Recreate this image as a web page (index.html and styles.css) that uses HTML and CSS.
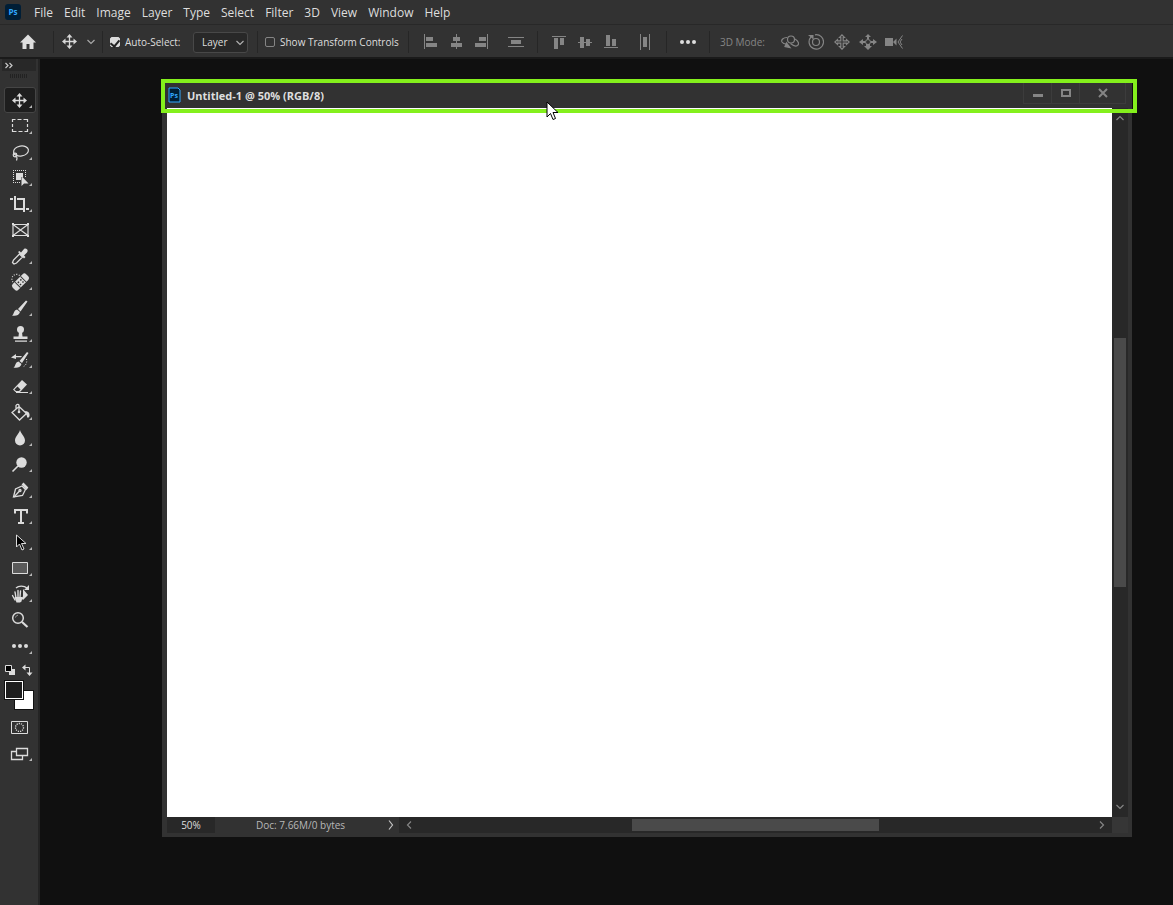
FILE: index.html
```html
<!DOCTYPE html>
<html lang="en">
<head>
    <meta charset="UTF-8">
    <meta name="viewport" content="width=device-width, initial-scale=1.0">
    <title>Untitled-1 @ 50% (RGB/8)</title>
    <link rel="stylesheet" href="styles.css">
</head>
<body>
    <nav class="menubar">
        <svg class="app-logo" width="16" height="16" viewBox="0 0 16 16"><rect width="16" height="16" rx="3" fill="#001e36"/><text x="8" y="11" text-anchor="middle">Ps</text></svg>
        <button>File</button>
        <button>Edit</button>
        <button>Image</button>
        <button>Layer</button>
        <button>Type</button>
        <button>Select</button>
        <button>Filter</button>
        <button>3D</button>
        <button>View</button>
        <button>Window</button>
        <button>Help</button>
    </nav>

    <div class="options">
        <button class="home" aria-label="Home"><svg width="16" height="16" viewBox="0 0 16 16"><path d="M8 0.5L0 8.5h2.5V15H6.500V10h3v5h4V8.500H16z" fill="#dedede"/></svg></button>
        <div class="current-tool">
            <button aria-label="Move tool">
                <svg width="16" height="16" viewBox="0 0 16 16"><path d="M7.500 2v11M2 7.500h11" stroke="#d8d8d8" stroke-width="1.300"/><path d="M7.500 0l3 3.500h-6zM7.500 15l3-3.500h-6zM0 7.500l3.500-3v6zM15 7.500l-3.500-3v6z" fill="#d8d8d8"/></svg>
            </button>
            <button aria-label="Tool presets"><svg width="8" height="6" viewBox="0 0 8 6"><path d="M.5 1L4 4.500 7.500 1" fill="none" stroke="#a8a8a8" stroke-width="1.200"/></svg></button>
        </div>
        <div class="select-group">
            <label class="check"><input type="checkbox" checked>Auto-Select:</label>
            <div class="dropdown">
                <select aria-label="Auto-select target"><option>Layer</option><option>Group</option></select>
                <svg class="arrow" width="8" height="6" viewBox="0 0 8 6"><path d="M.5 1L4 4.500 7.500 1" fill="none" stroke="#b0b0b0" stroke-width="1.200"/></svg>
            </div>
        </div>
        <div class="transform-group">
            <label class="check"><input type="checkbox">Show Transform Controls</label>
        </div>
        <div class="icon-group">
            <button aria-label="Align left edges"><svg width="16" height="16" viewBox="0 0 16 16" fill="#858585"><path d="M2 0h1v15H2zM4 3h7v4H4zM4 9h11v4H4z"/></svg></button>
            <button aria-label="Align horizontal centers"><svg width="16" height="16" viewBox="0 0 16 16" fill="#858585"><path d="M8 0h1v15H8zM5 3h7v4H5zM3 9h11v4H3z"/></svg></button>
            <button aria-label="Align right edges"><svg width="16" height="16" viewBox="0 0 16 16" fill="#858585"><path d="M13 0h1v15h-1zM5 3h7v4H5zM1 9h11v4H1z"/></svg></button>
            <button class="spaced" aria-label="Distribute vertically"><svg width="16" height="16" viewBox="0 0 16 16" fill="#858585"><path d="M0 3h16v1H0zM0 12h16v1H0zM3 6h10v4H3z"/></svg></button>
        </div>
        <div class="icon-group">
            <button aria-label="Align top edges"><svg width="16" height="16" viewBox="0 0 16 16" fill="#858585"><path d="M1 2h14v1H1zM3 4h4v11H3zM9 4h4v7H9z"/></svg></button>
            <button aria-label="Align vertical centers"><svg width="16" height="16" viewBox="0 0 16 16" fill="#858585"><path d="M1 8h14v1H1zM3 3h4v11H3zM9 5h4v7H9z"/></svg></button>
            <button aria-label="Align bottom edges"><svg width="16" height="16" viewBox="0 0 16 16" fill="#858585"><path d="M1 13h14v1H1zM3 1h4v11H3zM9 5h4v7H9z"/></svg></button>
            <button class="spaced" aria-label="Distribute horizontally"><svg width="16" height="16" viewBox="0 0 16 16" fill="#858585"><path d="M3 0h1v16H3zM12 0h1v16h-1zM6 3h4v10H6z"/></svg></button>
        </div>
        <div class="icon-group">
            <button aria-label="More options"><svg width="16" height="16" viewBox="0 0 16 16" fill="#dedede"><circle cx="2" cy="8" r="2"/><circle cx="8" cy="8" r="2"/><circle cx="14" cy="8" r="2"/></svg></button>
        </div>
        <div class="mode-group">
            <span>3D Mode:</span>
            <div class="mode-icons">
                <button aria-label="Orbit"><svg width="18" height="16" viewBox="0 0 18 16" fill="none" stroke="#858585" stroke-width="1.200"><circle cx="10" cy="5.500" r="3.500"/><path d="M6 3.500C2 3.500 0 6 1 8c1 1.500 3 2 4 2M14 5c3.500 2 4.500 5 2.500 6.500-1.500 1-4 .5-7-2"/><path d="M4 12.500L5.500 9l3.500 4.500z" fill="#858585"/></svg></button>
                <button aria-label="Roll"><svg width="16" height="16" viewBox="0 0 16 16" fill="none" stroke="#858585" stroke-width="1.200"><circle cx="8" cy="8" r="3.500"/><path d="M3 3a7.200 7.200 0 1 0 4-2.200"/><path d="M0 1h5.500v4.500z" fill="#858585" stroke="none"/></svg></button>
                <button aria-label="Pan"><svg width="16" height="16" viewBox="0 0 16 16" fill="none" stroke="#858585" stroke-width="1.200"><path d="M8 .8l2.500 2.700H9.200v3.300h3.300V5.500L15.200 8l-2.700 2.500V9.200H9.200v3.300h1.300L8 15.200l-2.500-2.700h1.300V9.200H3.500v1.300L.8 8l2.700-2.500v1.300h3.300V3.500H5.500z"/></svg></button>
                <button aria-label="Slide"><svg width="18" height="16" viewBox="0 0 18 16" fill="#858585"><circle cx="9" cy="8" r="2.500" fill="none" stroke="#858585"/><path d="M9 0l3 3h-2v2H8V3H6zM9 16l-4-4h2v-2h4v2h2zM0 8l4-3v2h2v2H4v2zM18 8l-4-3v2h-2v2h2v2z"/></svg></button>
                <button aria-label="Zoom camera"><svg width="18" height="16" viewBox="0 0 18 16" fill="#858585"><path d="M0 4h8v8H0zM8 8l3.500-3.500v7z"/><path d="M17.500 1.500L13 8l4.500 6.500M17 5l-2 3 2 3" fill="none" stroke="#858585"/></svg></button>
            </div>
        </div>
    </div>

    <main class="main">
        <aside class="toolbar">
            <button class="collapse" aria-label="Collapse toolbar"><svg width="8" height="7" viewBox="0 0 8 7"><path d="M.5 1l2.500 2.500L.5 6M4.500 1L7 3.500 4.500 6" fill="none" stroke="#c8c8c8" stroke-width="1.200"/></svg></button>
            <div class="grip"></div>
            <div class="tools">
                <button class="tool active" aria-label="Move"><svg viewBox="0 0 32 26"><path d="M15.500 8v11M10 13.500h11" stroke="#dcdcdc" stroke-width="1.300"/><path d="M15.500 6l3 3.500h-6zM15.500 21l3-3.500h-6zM8 13.500l3.500-3v6zM23 13.500l-3.500-3v6z" fill="#dcdcdc"/></svg></button>
                <button class="tool" aria-label="Rectangular marquee"><svg viewBox="0 0 32 26"><path d="M8.500 9V6.500h3M13.500 6.500h4M19.500 6.500h4V9M23.500 11v3M23.500 16v2.500h-3M18.500 18.500h-4M12.500 18.500h-4V16M8.500 14v-3" fill="none" stroke="#dcdcdc" stroke-width="1.200"/></svg></button>
                <button class="tool" aria-label="Lasso"><svg viewBox="0 0 32 26" fill="none" stroke="#dcdcdc" stroke-width="1.200"><ellipse cx="17" cy="12" rx="7.500" ry="5" transform="rotate(-10 17 12)"/><circle cx="11" cy="16" r="1.800"/><path d="M11 17.500c2 0 2.500 1 1.500 4"/></svg></button>
                <button class="tool" aria-label="Object selection"><svg viewBox="0 0 32 26"><path d="M9 5.500h13M9 17.500h8M9.500 7v11M21.500 7v5" fill="none" stroke="#dcdcdc" stroke-dasharray="1 1"/><path d="M12 8h7v4h-2v3h-5z" fill="#dcdcdc"/><path d="M17.500 11v10l2.500-2.500h4.500z" fill="#dcdcdc"/></svg></button>
                <button class="tool" aria-label="Crop"><svg viewBox="0 0 32 26"><path d="M11 5v13h9M22 18h3M6 8h3M13 8h7v13" fill="none" stroke="#dcdcdc" stroke-width="2"/></svg></button>
                <button class="tool plain" aria-label="Frame"><svg viewBox="0 0 32 26" fill="none" stroke="#dcdcdc" stroke-width="1.200"><path d="M9 7.500h15v11H9zM9 7.500l15 11M24 7.500l-15 11"/><path d="M8 7h2M23 7h2M8 19h2M23 19h2" stroke-width="2"/></svg></button>
                <button class="tool" aria-label="Eyedropper"><svg viewBox="0 0 32 26"><path d="M15.500 11l3 3-6 6-2.500 1-1.500-1.500 1-2.500z" fill="none" stroke="#dcdcdc" stroke-width="1.300"/><path d="M14 9l1.500-1 1.500 1.500 3-3.500c2-1.500 5 1 3 3.500l-3 3 1.500 1.500-1.500 1.500z" fill="#dcdcdc"/></svg></button>
                <button class="tool" aria-label="Spot healing"><svg viewBox="0 0 32 26"><path d="M9 13a4.500 4.500 0 1 1 7-6" fill="none" stroke="#dcdcdc" stroke-width="1.200" stroke-dasharray="1 1.500"/><g transform="rotate(-45 16.500 13)"><rect x="7" y="9" width="19" height="8" rx="2.500" fill="#dcdcdc"/><path d="M12.500 9v8M20.500 9v8" stroke="#323232"/><path d="M14 11h1.500v1.500H14zM17.500 11H19v1.500h-1.500zM14 14h1.500v1.500H14zM17.500 14H19v1.500h-1.500z" fill="#323232"/></g></svg></button>
                <button class="tool" aria-label="Brush"><svg viewBox="0 0 32 26" fill="#dcdcdc"><path d="M22 5.500l1.500 1-7 10-2.500-2.500zM13 14.500l3 2.500c-1 4-5 4-8 3.500 2-.5 1.500-5.500 5-6z"/></svg></button>
                <button class="tool" aria-label="Clone stamp"><svg viewBox="0 0 32 26" fill="#dcdcdc"><circle cx="16.500" cy="8.500" r="3.500"/><path d="M15 11h3l.5 4.500h5V18h-14v-2.500h5zM11 19.500h12v1.200H11z"/></svg></button>
                <button class="tool" aria-label="History brush"><svg viewBox="0 0 32 26" fill="#dcdcdc"><path d="M23 5l1.500 1-6.500 10-2.500-2zM14.500 14.500l3 2.500c-1 4-5 4-8 3.500 2-.5 1.500-5.500 5-6z"/><path d="M7 10.500L12 7v2h6l-1 1.200h-5V12z"/><path d="M22.500 12c1 4-1 7-4 8" fill="none" stroke="#dcdcdc" stroke-dasharray="1 1.500"/></svg></button>
                <button class="tool" aria-label="Eraser"><svg viewBox="0 0 32 26"><path d="M9 16.500l9-9.500 5 4.500-7 7.500h-4.500z" fill="#dcdcdc"/><path d="M10.500 16.500l3-3 3 3-1.500 1.500h-3z" fill="#323232"/><path d="M12 19.500h12" stroke="#dcdcdc"/></svg></button>
                <button class="tool" aria-label="Paint bucket"><svg viewBox="0 0 32 26"><path d="M15 7.500l7.500 7-7 6.500L8 13.500zM12 10V6.500c1-2 3-1 3 0v6" fill="none" stroke="#dcdcdc" stroke-width="1.300"/><circle cx="15" cy="13" r="1.300" fill="#dcdcdc"/><path d="M20.500 12.500c3.500-1 5.500 1.500 5 4.500-.5 2.500-3 2-2.500 0z" fill="#dcdcdc"/></svg></button>
                <button class="tool" aria-label="Blur"><svg viewBox="0 0 32 26"><path d="M16 5c1 4 5 6.500 5 10.500a5 5 0 0 1-10 0C11 11.500 15 9 16 5z" fill="#dcdcdc"/></svg></button>
                <button class="tool" aria-label="Dodge"><svg viewBox="0 0 32 26"><circle cx="17.500" cy="11.500" r="5.200" fill="#dcdcdc"/><path d="M14 15l-5.500 5.500" stroke="#dcdcdc" stroke-width="1.600"/></svg></button>
                <button class="tool" aria-label="Pen"><svg viewBox="0 0 32 26" fill="none" stroke="#dcdcdc" stroke-width="1.300"><path d="M9.500 20l2-8 6.500-3 3.500 3.500-3 6z"/><path d="M10 20l5.500-6"/><circle cx="16" cy="13.500" r="1"/><path d="M18.500 7.500l1-1 4 4-1 1.500z" fill="#dcdcdc"/></svg></button>
                <button class="tool type" aria-label="Horizontal type"><svg viewBox="0 0 32 26"><path d="M11 10.500V7h12v3.500M17 7v13M14 20h6" fill="none" stroke="#dcdcdc" stroke-width="2"/></svg></button>
                <button class="tool" aria-label="Path selection"><svg viewBox="0 0 32 26"><path d="M12.500 6v12l3-3 2.500 6 2-1-2.500-5.500H22z" fill="#000" stroke="#dcdcdc"/></svg></button>
                <button class="tool" aria-label="Rectangle"><svg viewBox="0 0 32 26"><path d="M8.500 7.500h15v11h-15z" fill="#5a5a5a" stroke="#dcdcdc"/></svg></button>
                <button class="tool" aria-label="Rotate view"><svg viewBox="0 0 32 26"><path d="M12 7c2.500-2.500 8-2.500 11 0" fill="none" stroke="#dcdcdc" stroke-width="1.300"/><path d="M25 4v5h-5zM19 8l5 6-5 5z" fill="#dcdcdc"/><path d="M11 19l-2.500-4.500M12 17l-1-6M14 16V9.500M16 16l.5-6M18 18l2.500-3.500" stroke="#dcdcdc" stroke-width="1.400" stroke-linecap="round"/><path d="M10.500 16h8l-1 4.500-1.500 1h-3.500z" fill="#dcdcdc"/></svg></button>
                <button class="tool plain" aria-label="Zoom"><svg viewBox="0 0 32 26"><circle cx="14" cy="11" r="5.300" fill="none" stroke="#dcdcdc" stroke-width="1.500"/><path d="M11.500 10.500c.5-1.500 1-2 2.500-2.300" fill="none" stroke="#a0a0a0"/><path d="M18 15l5.500 5" stroke="#dcdcdc" stroke-width="2.200"/></svg></button>
                <button class="tool" aria-label="Edit toolbar"><svg viewBox="0 0 32 26" fill="#dcdcdc"><circle cx="10" cy="13" r="2"/><circle cx="16" cy="13" r="2"/><circle cx="22" cy="13" r="2"/></svg></button>
            </div>
            <div class="color-actions">
                <button aria-label="Default colors"><svg width="10" height="12" viewBox="0 0 10 12"><path d="M4 5h6v6H4z" fill="#dcdcdc"/><path d="M.5 1.500h6v6h-6z" fill="#000" stroke="#dcdcdc"/></svg></button>
                <button aria-label="Swap colors"><svg width="11" height="12" viewBox="0 0 11 12"><path d="M3 3.500h4.500V9" fill="none" stroke="#dcdcdc"/><path d="M0 3.500L3.500.5v6zM4.500 8.500h6l-3 3.500z" fill="#dcdcdc"/></svg></button>
            </div>
            <div class="swatches">
                <button class="background-color" aria-label="Background color"></button>
                <button class="foreground-color" aria-label="Foreground color"></button>
            </div>
            <button class="tool plain" aria-label="Quick mask"><svg viewBox="0 0 32 26" fill="none" stroke="#dcdcdc"><path d="M7.500 7.500h16v12h-16z"/><circle cx="15.500" cy="13.500" r="4" stroke-width="1.300" stroke-dasharray="1.200 1"/></svg></button>
            <button class="tool" aria-label="Screen mode"><svg viewBox="0 0 32 26" fill="#323232" stroke="#dcdcdc" stroke-width="1.300"><path d="M7.500 11.500h11v8h-11z"/><path d="M12.500 8.500h11v7h-11z"/></svg></button>
        </aside>

        <section class="workspace">
            <div class="document">
                <header class="titlebar">
                    <svg width="13" height="16" viewBox="0 0 13 16"><path d="M1 1h9l2 2v12H1z" fill="#001e36" stroke="#31a8ff"/><text x="6" y="11" text-anchor="middle">Ps</text></svg>
                    <h1>Untitled-1 @ 50% (RGB/8)</h1>
                    <div class="window-buttons">
                        <button aria-label="Minimize"><svg width="10" height="10" viewBox="0 0 10 10"><path d="M0 6h10v3H0z" fill="#858585"/></svg></button>
                        <button aria-label="Maximize"><svg width="10" height="10" viewBox="0 0 10 10"><path d="M1 2h8v6H1z" fill="none" stroke="#858585" stroke-width="2"/></svg></button>
                        <button class="close" aria-label="Close"><svg width="10" height="10" viewBox="0 0 10 10"><path d="M1 1l8 8M9 1L1 9" stroke="#858585" stroke-width="2"/></svg></button>
                    </div>
                </header>
                <div class="canvas"></div>
                <div class="scroll-y">
                    <svg width="8" height="6" viewBox="0 0 8 6"><path d="M.5 5L4 1.500 7.500 5" fill="none" stroke="#858585" stroke-width="1.200"/></svg>
                    <div class="track"><div class="thumb"></div></div>
                    <svg width="8" height="6" viewBox="0 0 8 6"><path d="M.5 1L4 4.500 7.500 1" fill="none" stroke="#858585" stroke-width="1.200"/></svg>
                </div>
                <footer class="statusbar">
                    <input class="zoom-level" type="text" value="50%" aria-label="Zoom level">
                    <div class="doc-info">
                        <span>Doc: 7.66M/0 bytes</span>
                        <button aria-label="Status options"><svg width="6" height="10" viewBox="0 0 6 10"><path d="M1 .5L4.500 5 1 9.500" fill="none" stroke="#c4c4c4" stroke-width="1.200"/></svg></button>
                    </div>
                    <div class="scroll-x">
                        <svg width="6" height="8" viewBox="0 0 6 8"><path d="M5 .5L1.500 4 5 7.500" fill="none" stroke="#858585" stroke-width="1.200"/></svg>
                        <div class="track"><div class="thumb"></div></div>
                        <svg width="6" height="8" viewBox="0 0 6 8"><path d="M1 .5L4.500 4 1 7.500" fill="none" stroke="#858585" stroke-width="1.200"/></svg>
                    </div>
                </footer>
                <div class="corner"></div>
                <div class="highlight"></div>
                <svg class="cursor" width="14" height="20" viewBox="0 0 14 20"><path d="M1 1v15l3.500-3.500 2.500 6 2.500-1-2.500-6h5z" fill="#fff" stroke="#000"/></svg>
            </div>
        </section>
    </main>
</body>
</html>
```
FILE: styles.css
```css
* {
    box-sizing: border-box;
}

body {
    margin: 0;
    height: 100vh;
    display: flex;
    flex-direction: column;
    overflow: hidden;
    background-color: #101010;
    color: #dedede;
    font-family: 'Open Sans', sans-serif;
    font-size: 10px;
}

button {
    padding: 0;
    border: none;
    background: none;
    color: inherit;
    font: inherit;
    display: flex;
    align-items: center;
    justify-content: center;
}

svg {
    display: block;
    flex: none;
}

svg text {
    fill: #31a8ff;
    font-size: 8px;
    font-weight: bold;
}

/* Top menu */
.menubar {
    display: flex;
    align-items: center;
    gap: 11px;
    height: 24px;
    padding-left: 5px;
    background-color: #323232;
    font-size: 12px;
}

.app-logo {
    margin-right: 2px;
}

/* Tool options bar */
.options {
    display: flex;
    align-items: center;
    height: 35px;
    padding-top: 2px;
    background-color: #323232;
    border-top: 1px solid #282828;
    border-bottom: 2px solid #1a1a1a;
    white-space: nowrap;
}

.options > * {
    height: 22px;
    display: flex;
    align-items: center;
    border-right: 1px solid #262626;
}

.options > .home {
    width: 54px;
    padding-left: 2px;
}

.current-tool {
    gap: 9px;
    width: 49px;
    padding-left: 8px;
}

.select-group {
    justify-content: space-between;
    width: 155px;
    padding: 0 9px 0 7px;
}

.transform-group {
    width: 151px;
    padding-left: 7px;
}

.check {
    display: flex;
    align-items: center;
    gap: 5px;
}

.check input {
    appearance: none;
    width: 10px;
    height: 10px;
    margin: 0;
    border: 1px solid #858585;
    border-radius: 2px;
    display: grid;
    place-items: center;
}

.check input:checked {
    background-color: #dcdcdc;
    border-color: #dcdcdc;
}

.check input:checked::after {
    content: "";
    width: 4px;
    height: 7px;
    border: solid #222;
    border-width: 0 2px 2px 0;
    transform: rotate(40deg);
}

.dropdown {
    position: relative;
}

.dropdown select {
    appearance: none;
    width: 55px;
    height: 21px;
    padding: 0 8px;
    background-color: #282828;
    color: #dedede;
    border: 1px solid #484848;
    border-radius: 3px;
    font: inherit;
}

.arrow {
    position: absolute;
    right: 4px;
    top: 8px;
}

.icon-group {
    padding: 0 8px;
}

.icon-group button,
.mode-icons button {
    width: 26px;
    height: 22px;
}

.icon-group .spaced {
    margin-left: 8px;
}

.options > .mode-group {
    gap: 12px;
    padding-left: 10px;
    border: none;
    color: #858585;
}

.mode-icons {
    display: flex;
}

/* Left toolbar */
.main {
    flex: 1;
    display: flex;
    min-height: 0;
}

.toolbar {
    width: 40px;
    flex: none;
    padding: 0 2px;
    background-color: #323232;
    border-right: 2px solid #242424;
}

.collapse {
    width: 100%;
    height: 12px;
    padding-left: 3px;
    justify-content: flex-start;
    background-color: #282828;
}

.grip {
    height: 4px;
    margin: 3px 8px 9px;
    background: repeating-linear-gradient(90deg, #222 0 1px, #323232 1px 2px);
}

.tool {
    position: relative;
    width: 32px;
    height: 26px;
    margin-left: 2px;
}

.tool svg {
    width: 32px;
    height: 26px;
}

.tool.active {
    background-color: #1e1e1e;
    border-radius: 3px;
    box-shadow: inset 0 0 0 1px #454545;
}

.tool::after {
    content: "";
    position: absolute;
    right: 4px;
    bottom: 5px;
    border-left: 3px solid transparent;
    border-bottom: 3px solid #b8b8b8;
}

.tool.plain::after {
    display: none;
}

.color-actions {
    display: flex;
    gap: 7px;
    padding: 5px 0 5px 3px;
}

.swatches {
    position: relative;
    width: 28px;
    height: 28px;
    margin: 0 0 5px 3px;
}

.swatches button {
    position: absolute;
    width: 18px;
    height: 18px;
}

.swatches .foreground-color {
    left: 0;
    top: 0;
    background-color: #1e1e1e;
    border: 1px solid #fff;
    outline: 1px solid #111;
}

.swatches .background-color {
    right: 0;
    bottom: 0;
    background-color: #fff;
    outline: 1px solid #111;
}

/* Floating document window */
.workspace {
    flex: 1;
    display: flex;
    min-width: 0;
    padding: 23px 41px 68px 122px;
}

.document {
    position: relative;
    flex: 1;
    min-width: 0;
    display: grid;
    grid-template-columns: 1fr 16px;
    grid-template-rows: 26px 1fr 16px;
    padding: 0 4px 4px 5px;
    background-color: #323232;
}

.titlebar {
    grid-column: span 2;
    display: flex;
    align-items: center;
    gap: 6px;
    padding-left: 1px;
}

.titlebar text {
    font-size: 7px;
}

.titlebar h1 {
    margin: 0;
    flex: 1;
    font-size: 11px;
    font-weight: bold;
}

.window-buttons {
    display: flex;
    align-self: flex-start;
    margin-right: 2px;
}

.window-buttons button {
    width: 28px;
    height: 22px;
    padding-top: 1px;
    border: solid #3c3c3c;
    border-width: 0 0 1px 1px;
}

.window-buttons .close {
    width: 47px;
    border-right-width: 1px;
}

.canvas {
    background-color: #fff;
}

.scroll-y {
    display: flex;
    flex-direction: column;
    align-items: center;
    padding: 7px 0;
    background-color: #282828;
}

.track {
    flex: 1;
    display: flex;
}

.scroll-y .track {
    flex-direction: column;
    padding: 217px 0;
}

.scroll-y .thumb {
    width: 12px;
    flex: 1;
    background-color: #4a4a4a;
}

.statusbar {
    display: flex;
    min-width: 0;
    background-color: #282828;
    color: #b8b8b8;
}

.zoom-level {
    width: 48px;
    padding: 0;
    border: none;
    background-color: #282828;
    color: #dedede;
    font: inherit;
    text-align: center;
}

.doc-info {
    display: flex;
    align-items: center;
    justify-content: space-between;
    width: 184px;
    padding: 0 5px 0 41px;
    background-color: #323232;
}

.scroll-x {
    flex: 1;
    display: flex;
    align-items: center;
    padding: 0 7px;
}

.scroll-x .thumb {
    width: 36%;
    height: 12px;
    margin-left: 32%;
    background-color: #4a4a4a;
}

.corner {
    background-color: #363636;
}

.highlight {
    position: absolute;
    left: -1px;
    right: -5px;
    top: -3px;
    height: 34px;
    border: 4px solid #84f01c;
}

.cursor {
    position: absolute;
    left: 384px;
    top: 19px;
}
```
